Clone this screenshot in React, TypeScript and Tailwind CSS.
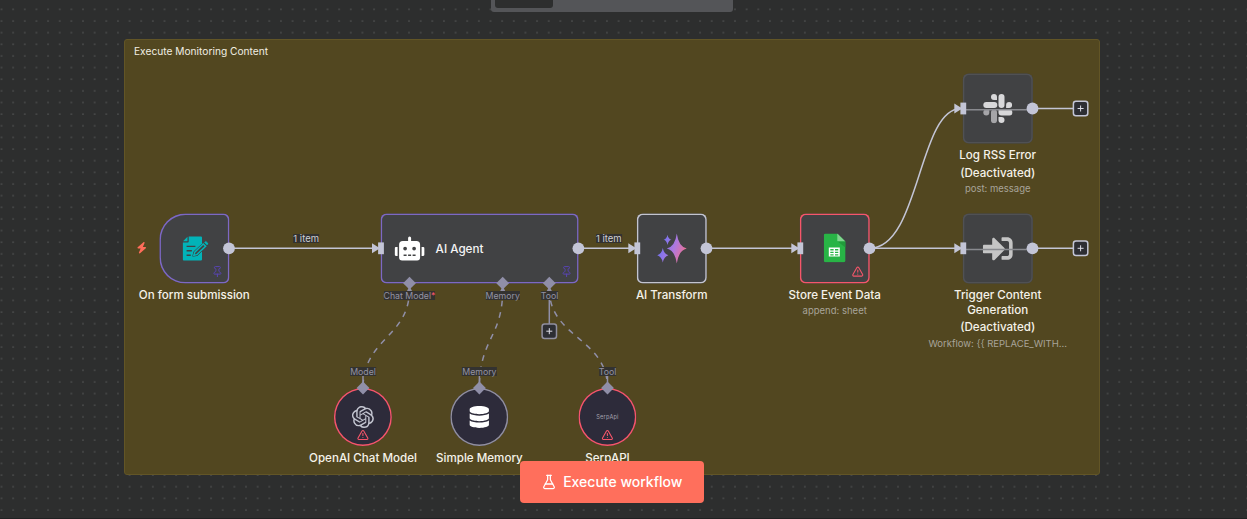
import type { ReactNode } from 'react';
import { FlaskConical, Pin, TriangleAlert } from 'lucide-react';
import { FaDatabase, FaRobot, FaSignInAlt } from 'react-icons/fa';
import { FaBolt } from 'react-icons/fa6';
import { SiOpenai } from 'react-icons/si';

const LINE = '#c3c5d6';
const SUB = '#908fa8';

function FormIcon() {
  return (
    <svg className="ml-[2px]" width="26" height="26" viewBox="0 0 26 26">
      <path d="M6.3 .8H18.6Q19.6 .8 19.6 1.8V24Q19.6 25 18.6 25H1.4Q.4 25 .4 24V7H5.3Q6.3 7 6.3 6Z" fill="#02b3b8" />
      <path d="M.6 5.7L5.1 1.1V5.7Z" fill="#02b3b8" />
      <path d="M4.2 10.8H13M4.2 15.2H9.5M4.2 19.7H8.4" stroke="#414244" strokeWidth="1.4" />
      <path d="M10.4 20.6L11.6 16L21.4 6.8L25 10.1L15 19.8Z" fill="#414244" stroke="#414244" strokeWidth="1" />
      <path d="M11.4 19.8L12.4 16.5L20.8 8.4L23.2 10.6L14.7 18.8Z" fill="none" stroke="#02b3b8" strokeWidth="1.5" />
      <path d="M22 6.9L23.4 5.6L26 8.1L24.6 9.5Z" fill="#02b3b8" stroke="#02b3b8" strokeWidth=".4" />
    </svg>
  );
}

function SparkIcon() {
  return (
    <svg width="30" height="30" viewBox="0 0 30 30">
      <defs>
        <linearGradient id="spark" gradientUnits="userSpaceOnUse" x1="2" y1="8" x2="30" y2="19">
          <stop offset="0.1" stopColor="#7572ee" />
          <stop offset="0.55" stopColor="#ad79df" />
          <stop offset="1" stopColor="#f2708b" />
        </linearGradient>
      </defs>
      <g fill="url(#spark)">
        <path d="M20 0Q21.7 13 30 15Q21.7 17 20 30Q18.3 17 10 15Q18.3 13 20 0Z" />
        <path d="M10.7 1.2Q11.5 5.4 14.6 6.2Q11.5 7 10.7 11.3Q9.9 7 6.8 6.2Q9.9 5.4 10.7 1.2Z" />
        <path d="M6 14.5Q7.2 20.5 11.6 21.7Q7.2 22.9 6 29Q4.8 22.9 .4 21.7Q4.8 20.5 6 14.5Z" />
      </g>
    </svg>
  );
}

function SheetIcon() {
  return (
    <svg width="22" height="29" viewBox="0 0 22 29">
      <path d="M1.6 0H13.5L21.6 8V27Q21.6 28.7 20 28.7H1.6Q0 28.7 0 27V1.6Q0 0 1.6 0Z" fill="#28b446" />
      <path d="M13.5 0L21.6 8H14.8Q13.5 8 13.5 6.7Z" fill="#80d58e" />
      <path d="M13.8 8H21.6V14Z" fill="#219b3b" />
      <path d="M5 14H16V23H5ZM6.5 15.4V17H9.8V15.4ZM11.2 15.4V17H14.5V15.4ZM6.5 18.2V19.5H9.8V18.2ZM11.2 18.2V19.5H14.5V18.2ZM6.5 20.7V22H9.8V20.7ZM11.2 20.7V22H14.5V20.7Z" fill="#fff" fillRule="evenodd" />
    </svg>
  );
}

function SlackIcon() {
  return (
    <svg width="30" height="30" viewBox="0 0 30 30">
      <g fill="#d8d8da">
        <path d="M11.2 .5A3 3 0 0 1 14.2 3.5V6.5H11.2A3 3 0 0 1 11.2 .5Z" />
        <rect x=".5" y="8.3" width="14" height="6" rx="3" />
        <rect x="15.7" y=".5" width="6" height="13.8" rx="3" />
        <path d="M23.3 14.3V11.3A3 3 0 1 1 26.3 14.3Z" />
        <path d="M15.7 16H26.7A2.9 2.9 0 0 1 26.7 21.8H18.7A3 3 0 0 1 15.7 18.8Z" />
        <path d="M15.7 23.5H18.7A3 3 0 1 1 15.7 26.5Z" />
      </g>
      <g fill="#a5a5a8">
        <path d="M6.5 16V19A3 3 0 1 1 3.5 16Z" />
        <rect x="8.2" y="16" width="6" height="13.7" rx="3" />
      </g>
    </svg>
  );
}

type NodeProps = { place: string; shape: string; icon: ReactNode; status?: ReactNode; children?: ReactNode };

function Node({ place, shape, icon, status, children }: NodeProps) {
  return (
    <article className={`absolute top-0 left-0 flex flex-col items-center gap-[4px] ${place}`}>
      <div className={`grid h-[69.8px] w-full grid-cols-1 grid-rows-1 bg-[#414244] ${shape}`}>
        <div className="col-start-1 row-start-1 flex items-center justify-center">{icon}</div>
        <div className="col-start-1 row-start-1 flex items-end justify-end p-[6px]">{status}</div>
      </div>
      <div className="flex flex-col items-center text-[11.6px] leading-[15px] font-medium whitespace-nowrap text-[#f5f2e9]">
        {children}
      </div>
    </article>
  );
}

function SubNode({ place, ring, icon, status, name }: { place: string; ring: string; icon: ReactNode; status?: ReactNode; name: string }) {
  return (
    <article className={`absolute top-0 left-0 flex w-[58.2px] flex-col items-center gap-[5px] ${place}`}>
      <div className={`grid size-[58.2px] grid-cols-1 grid-rows-1 rounded-full bg-[#2d2b3a] ${ring}`}>
        <div className="col-start-1 row-start-1 flex items-center justify-center">{icon}</div>
        <div className="col-start-1 row-start-1 flex items-end justify-center pb-[5px]">{status}</div>
      </div>
      <p className="text-[11.6px] leading-[15px] font-medium whitespace-nowrap text-[#f5f2e9]">{name}</p>
    </article>
  );
}

function Subtitle({ children }: { children: ReactNode }) {
  return <p className="mt-px text-[9.5px] leading-[14px] font-normal text-[#a8a499]">{children}</p>;
}

function Tag({ className, children }: { className: string; children: ReactNode }) {
  return (
    <div className={`absolute flex h-[9px] -translate-x-1/2 items-center bg-[#333230] whitespace-nowrap ${className}`}>
      {children}
    </div>
  );
}

function Plus({ x, y, color }: { x: number; y: number; color: string }) {
  return (
    <g>
      <rect x={x - 7.2} y={y - 7.2} width="14.4" height="14.4" rx="2.5" fill="#2d2e33" stroke={color} strokeWidth="1.5" />
      <path d={`M${x - 3} ${y}H${x + 3}M${x} ${y - 3}V${y + 3}`} stroke="#dcdde6" strokeWidth="1" />
    </g>
  );
}

const pin = <Pin className="size-[12px] text-[#5945b4]" strokeWidth={2} />;
const alert = <TriangleAlert className="size-[12px] text-[#f6566a]" strokeWidth={2.2} />;

const inputs = [[381, 248.3], [637.3, 248.3], [800.3, 248.3], [963.3, 248.3], [963.3, 108.5]];
const outputs = [[229, 248.3], [578.4, 248.3], [706.5, 248.3], [869.5, 248.3], [1032.5, 248.3], [1032.5, 108.5]];
const diamonds = [[409.5, 283.2], [502.7, 283.2], [549.3, 283.2], [363, 388], [479.4, 388], [607.5, 388]];

export default function App() {
  return (
    <main className="relative h-[519px] w-[1247px] overflow-hidden bg-[#2d2e2e] font-['Inter',sans-serif]">
      <svg className="absolute inset-0" width="1247" height="519">
        <defs>
          <pattern id="dots" x="-4.3" y="-8.2" width="11.643" height="11.643" patternUnits="userSpaceOnUse">
            <circle cx="5.82" cy="5.82" r="0.6" fill="#838484" />
          </pattern>
        </defs>
        <rect y="6" width="1247" height="513" fill="url(#dots)" />
      </svg>

      <div className="relative ml-[491px] h-[12px] w-[242px] rounded-b-[3px] bg-[#545558] px-[4px]">
        <div className="h-[8px] w-[58px] rounded-b-[3px] bg-[#2d2e2e]" />
      </div>

      <section className="relative mt-[27px] ml-[124px] h-[436px] w-[976px] rounded-[3px] border border-[#625526] bg-[#524720] px-[9px] py-[4px]">
        <p className="text-[10.2px] leading-[14px] text-[#f1eee3]">Execute Monitoring Content</p>
      </section>

      <svg className="absolute inset-0" width="1247" height="519" fill="none">
        <g stroke={LINE} strokeWidth="1.5">
          <path d="M229 248.3H375M578.4 248.3H632M706.5 248.3H795M869.5 248.3H958M1032.5 248.3H1073" />
          <path d="M869.5 248.3C920 248.3 918 108.5 961 108.5M1032.5 108.5H1073" />
        </g>
        <g stroke={SUB} strokeWidth="1.5">
          <path strokeDasharray="5.8 5.8" d="M409.5 289C409.5 338 363 338 363 388M502.7 289C502.7 338 479.4 338 479.4 388M549.3 289C549.3 338 607.5 338 607.5 388" />
          <path d="M549.3 283V324M363 376V388M479.4 376V388M607.5 376V388" />
        </g>
      </svg>

      <FaBolt className="absolute top-[242px] left-[136px] size-[11.5px] text-[#ff6d5a]" />

      <Node place="w-[69.8px] translate-x-[159.4px] translate-y-[213.6px]" shape="rounded-l-[26px] rounded-r-[6px] shadow-[inset_0_0_0_1.5px_#7d68c4]" icon={<FormIcon />} status={pin}>
        <p>On form submission</p>
      </Node>
      <Node
        place="w-[198px] translate-x-[380.6px] translate-y-[213.6px]"
        shape="rounded-[6px] shadow-[inset_0_0_0_1.5px_#7d68c4]"
        icon={
          <div className="flex w-full items-center gap-[11px] pl-[14px]">
            <FaRobot className="size-[30px] text-white" />
            <span className="pt-px text-[11.7px] leading-[15px] font-medium text-[#f4f4f5]">AI Agent</span>
          </div>
        }
        status={pin}
      />
      <Node place="w-[69.8px] translate-x-[636.8px] translate-y-[213.6px]" shape="rounded-[6px] shadow-[inset_0_0_0_1.5px_#c3c4cf]" icon={<SparkIcon />}>
        <p>AI Transform</p>
      </Node>
      <Node place="w-[69.8px] translate-x-[799.8px] translate-y-[213.6px]" shape="rounded-[6px] shadow-[inset_0_0_0_1.5px_#f6566a]" icon={<SheetIcon />} status={alert}>
        <p>Store Event Data</p>
        <Subtitle>append: sheet</Subtitle>
      </Node>
      <Node place="w-[69.8px] translate-x-[962.8px] translate-y-[213.6px]" shape="rounded-[6px] shadow-[inset_0_0_0_1.5px_#505154]" icon={<FaSignInAlt className="size-[30px] text-[#c5c5c5]" />}>
        <p>Trigger Content</p>
        <p>Generation</p>
        <p className="mt-[2px] mb-px">(Deactivated)</p>
        <Subtitle>Workflow: {'{{'} REPLACE_WITH...</Subtitle>
      </Node>
      <Node place="w-[69.8px] translate-x-[962.8px] translate-y-[73.6px]" shape="rounded-[6px] shadow-[inset_0_0_0_1.5px_#505154]" icon={<SlackIcon />}>
        <p>Log RSS Error</p>
        <p className="mt-[3px]">(Deactivated)</p>
        <Subtitle>post: message</Subtitle>
      </Node>

      <SubNode place="translate-x-[333.9px] translate-y-[388px]" ring="shadow-[inset_0_0_0_1.5px_#f6566a]" icon={<SiOpenai className="size-[22px] text-[#c3c5d0]" />} status={alert} name="OpenAI Chat Model" />
      <SubNode place="translate-x-[450.3px] translate-y-[388px]" ring="shadow-[inset_0_0_0_1.5px_#918f9f]" icon={<FaDatabase className="size-[22px] text-white" />} name="Simple Memory" />
      <SubNode place="translate-x-[578.4px] translate-y-[388px]" ring="shadow-[inset_0_0_0_1.5px_#f6566a]" icon={<span className="text-[5.6px] tracking-[0.2px] text-[#a5a4af]">SerpApi</span>} status={alert} name="SerpAPI" />

      <svg className="absolute inset-0" width="1247" height="519">
        <path d="M964 249.6H1030M964 109.8H1030" stroke="#898a8f" strokeWidth="1.5" />
        {inputs.map(([x, y]) => (
          <g key={`${x}-${y}`} fill={LINE}>
            <path d={`M${x - 9} ${y - 5}L${x - 1} ${y}L${x - 9} ${y + 5}Z`} />
            <rect x={x - 2.9} y={y - 5.9} width="5.8" height="11.8" />
          </g>
        ))}
        {outputs.map(([x, y]) => <circle key={`${x}-${y}`} cx={x} cy={y} r="5.9" fill={LINE} />)}
        {diamonds.map(([x, y]) => (
          <path key={x} d={`M${x} ${y - 6.4}L${x + 6.4} ${y}L${x} ${y + 6.4}L${x - 6.4} ${y}Z`} fill={SUB} />
        ))}
        {diamonds.slice(0, 3).map(([x]) => (
          <path key={x} d={`M${x - 3} 292L${x} 286L${x + 3} 292Z`} fill={SUB} />
        ))}
        <Plus x={549.3} y={331.2} color="#908fa0" />
        <Plus x={1080.6} y={248.3} color={LINE} />
        <Plus x={1080.6} y={108.5} color={LINE} />
      </svg>

      <Tag className="top-[234px] left-[306.2px] text-[9.5px] leading-[9px] text-[#cfcfd2]">1 item</Tag>
      <Tag className="top-[234px] left-[608.8px] text-[9.5px] leading-[9px] text-[#cfcfd2]">1 item</Tag>
      <Tag className="top-[291px] left-[409.5px] text-[8.75px] leading-[11px] text-[#9492a3]"><span className="pt-px">Chat Model<span className="text-[#f6566a]">*</span></span></Tag>
      <Tag className="top-[291px] left-[502.7px] text-[8.75px] leading-[11px] text-[#9492a3]"><span className="pt-px">Memory</span></Tag>
      <Tag className="top-[291px] left-[549.5px] text-[8.75px] leading-[11px] text-[#9492a3]"><span className="pt-px">Tool</span></Tag>
      <Tag className="top-[367px] left-[363px] text-[8.75px] leading-[11px] text-[#9492a3]"><span className="pt-px">Model</span></Tag>
      <Tag className="top-[367px] left-[479.4px] text-[8.75px] leading-[11px] text-[#9492a3]"><span className="pt-px">Memory</span></Tag>
      <Tag className="top-[367px] left-[607.5px] text-[8.75px] leading-[11px] text-[#9492a3]"><span className="pt-px">Tool</span></Tag>

      <button className="absolute top-[461px] left-[520px] flex h-[42px] w-[183.5px] items-center justify-center gap-[6px] rounded-[4px] bg-[#ff6f5c] text-[14px] font-medium text-white">
        <FlaskConical className="size-[16px]" strokeWidth={1.9} />
        <span className="pb-[2px]">Execute workflow</span>
      </button>
      <div className="absolute bottom-0 left-0 h-px w-full bg-[#202122]" />
    </main>
  );
}
